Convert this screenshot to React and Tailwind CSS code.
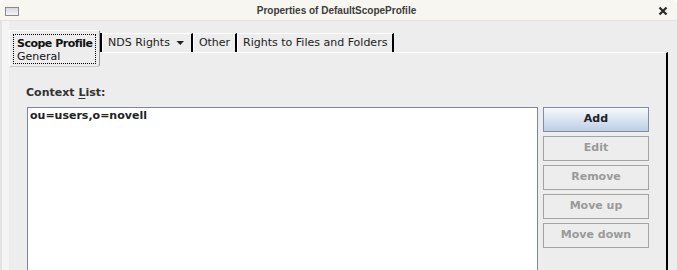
import React from "react";

const FONT = { fontFamily: '"DejaVu Sans", "Liberation Sans", sans-serif' };

function TabButton({ children }) {
  return (
    <div className="h-[19px] flex items-center px-[5px] bg-[#ededed] border-t border-t-white border-l border-l-white border-r-2 border-r-black text-[11px] text-[#222] whitespace-nowrap">
      {children}
    </div>
  );
}

function SideButton({ label, primary }) {
  return (
    <button
      className={
        "h-[25px] w-[106px] flex items-center justify-center text-[11px] font-bold border " +
        (primary
          ? "border-[#7d8ea6] bg-gradient-to-b from-[#f7f9fc] to-[#bccfe6] text-[#222]"
          : "border-[#a3a3a3] bg-[#ededed] text-[#9a9a9a]")
      }
    >
      {label}
    </button>
  );
}

export default function App() {
  return (
    <div
      className="w-[677px] h-[270px] overflow-hidden bg-[#ededed] flex flex-col rounded-t-[6px]"
      style={FONT}
    >
      {/* title bar */}
      <div className="h-[21px] bg-[#f8f6f0] flex items-center px-[5px] shrink-0 border-b border-[#e4e2dc]">
        <div className="w-[14px] h-[9px] border border-[#8a8a8a] bg-gradient-to-b from-[#d8d8e0] to-[#f4f4f8] mt-[2px]" />
        <div
          className="flex-1 text-center text-[10px] font-bold text-[#3c3c3c] pr-[4px]"
          style={{ fontFamily: '"Liberation Sans", "DejaVu Sans", sans-serif' }}
        >
          Properties of DefaultScopeProfile
        </div>
        <svg width="10" height="10" viewBox="0 0 10 10" className="mr-[4px] mt-[1px]">
          <path d="M1.5 1.5 L8.5 8.5 M8.5 1.5 L1.5 8.5" stroke="#2a2a2a" strokeWidth="2.2" />
        </svg>
      </div>

      {/* body */}
      <div className="flex-1 flex border-l-2 border-[#e2e2e2]">
        <div className="w-[7px] bg-[#f4f4f4] shrink-0" />
        <div className="flex-1 flex flex-col pt-[9px] pr-[9px]">
          {/* tab row */}
          <div className="flex h-[37px] shrink-0">
            <div className="w-[91px] h-[37px] border border-[#c9c9c9] border-r-[#9a9a9a] border-t-white border-l-white rounded-br-[3px] p-[3px] pb-[2px] bg-[#ededed] shrink-0">
              <div className="h-full border border-dotted border-black px-[3px] pt-[2px] leading-[13px] text-[11px] text-[#111] whitespace-nowrap">
                <div className="font-bold tracking-[-0.5px]">Scope Profile</div>
                <div>General</div>
              </div>
            </div>
            <div className="flex-1 flex flex-col">
              <div className="flex mt-[3px] border-l-2 border-black h-[19px]">
                <TabButton>
                  NDS Rights
                  <svg width="9" height="6" viewBox="0 0 9 6" className="ml-[6px] mr-[1px]">
                    <path d="M0.5 1 L8 1 L4.25 5 Z" fill="#222" />
                  </svg>
                </TabButton>
                <TabButton>Other</TabButton>
                <TabButton>Rights to Files and Folders</TabButton>
              </div>
              <div className="flex-1 border-t border-t-white border-r-2 border-r-black" />
            </div>
          </div>

          {/* panel content */}
          <div className="flex-1 border-r-2 border-black pl-[17px] pt-[19px]">
            <div className="text-[11px] font-bold text-[#333] leading-[14px]">
              Context <span className="underline underline-offset-2">L</span>ist:
            </div>
            <div className="flex mt-[7px] ml-[1px] gap-[5px]">
              <div className="w-[511px] h-[200px] bg-white border border-[#7a8797] pl-[2px] pt-[1px] text-[11px] font-bold text-[#222] leading-[14px]">
                ou=users,o=novell
              </div>
              <div className="flex flex-col gap-[4px]">
                <SideButton label="Add" primary />
                <SideButton label="Edit" />
                <SideButton label="Remove" />
                <SideButton label="Move up" />
                <SideButton label="Move down" />
              </div>
            </div>
          </div>
        </div>
      </div>
    </div>
  );
}
